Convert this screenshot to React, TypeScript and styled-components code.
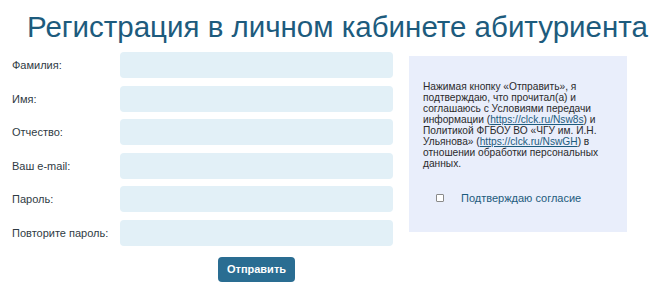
import styled, { createGlobalStyle } from 'styled-components'

const GlobalStyle = createGlobalStyle`
  body {
    margin: 0;
    background: #ffffff;
    font-family: 'Liberation Sans', Arial, sans-serif;
  }
`

const Page = styled.div`
  width: 649px;
  height: 294px;
  overflow: hidden;
`

const Title = styled.h1`
  margin: 0;
  padding: 10px 0 0 27px;
  height: 43px;
  box-sizing: border-box;
  font-size: 29.5px;
  font-weight: normal;
  line-height: 33px;
  color: #1d5b7d;
  white-space: nowrap;
`

const Layout = styled.div`
  display: flex;
  align-items: flex-start;
  padding: 9px 0 0 12px;
`

const Form = styled.form`
  display: flex;
  flex-direction: column;
  width: 381px;
`

const Rows = styled.div`
  display: flex;
  flex-direction: column;
  gap: 7.6px;
`

const Row = styled.label`
  display: flex;
  align-items: center;
`

const Label = styled.span`
  width: 108px;
  font-size: 11px;
  color: #2f3b44;
`

const Input = styled.input`
  width: 273px;
  height: 26px;
  box-sizing: border-box;
  border: none;
  border-radius: 4px;
  background: #e2f0f7;
  outline: none;
`

const Actions = styled.div`
  display: flex;
  justify-content: center;
  padding: 11px 0 0 108px;
`

const Submit = styled.button`
  width: 77px;
  height: 25px;
  border: none;
  border-radius: 4px;
  background: #2a6d92;
  color: #ffffff;
  font-family: 'Liberation Sans', Arial, sans-serif;
  font-size: 11px;
  font-weight: bold;
  cursor: pointer;
`

const Notice = styled.aside`
  width: 218px;
  height: 176px;
  box-sizing: border-box;
  margin: 4px 0 0 16px;
  padding: 25px 2px 0 14px;
  background: #e9eefb;
`

const NoticeText = styled.p`
  margin: 0;
  font-size: 10.2px;
  line-height: 11px;
  color: #2b2b2b;
`

const Link = styled.a`
  color: #1d5b7d;
  text-decoration: underline;
`

const Consent = styled.label`
  display: flex;
  align-items: center;
  gap: 17px;
  margin: 23px 0 0 13px;
  font-size: 11px;
  color: #1d5b7d;
`

const Check = styled.input`
  appearance: none;
  width: 8px;
  height: 8px;
  margin: 0;
  border: 1px solid #8a8a8a;
  border-radius: 1px;
  background: #ffffff;
  box-sizing: border-box;

  &:checked {
    background: #2a6d92;
  }
`

export default function App() {
  const fields = ['Фамилия:', 'Имя:', 'Отчество:', 'Ваш e-mail:', 'Пароль:', 'Повторите пароль:']

  return (
    <Page>
      <GlobalStyle />
      <Title>Регистрация в личном кабинете абитуриента</Title>
      <Layout>
        <Form onSubmit={(e) => e.preventDefault()}>
          <Rows>
            {fields.map((f, i) => (
              <Row key={f}>
                <Label>{f}</Label>
                <Input type={i >= 4 ? 'password' : i === 3 ? 'email' : 'text'} />
              </Row>
            ))}
          </Rows>
          <Actions>
            <Submit type='submit'>Отправить</Submit>
          </Actions>
        </Form>
        <Notice>
          <NoticeText>
            Нажимая кнопку «Отправить», я подтверждаю, что прочитал(а) и соглашаюсь с Условиями передачи
            информации (<Link href='#'>https://clck.ru/Nsw8s</Link>) и Политикой ФГБОУ ВО «ЧГУ им. И.Н.
            Ульянова» (<Link href='#'>https://clck.ru/NswGH</Link>) в отношении обработки персональных
            данных.
          </NoticeText>
          <Consent>
            <Check type='checkbox' />
            Подтверждаю согласие
          </Consent>
        </Notice>
      </Layout>
    </Page>
  )
}
